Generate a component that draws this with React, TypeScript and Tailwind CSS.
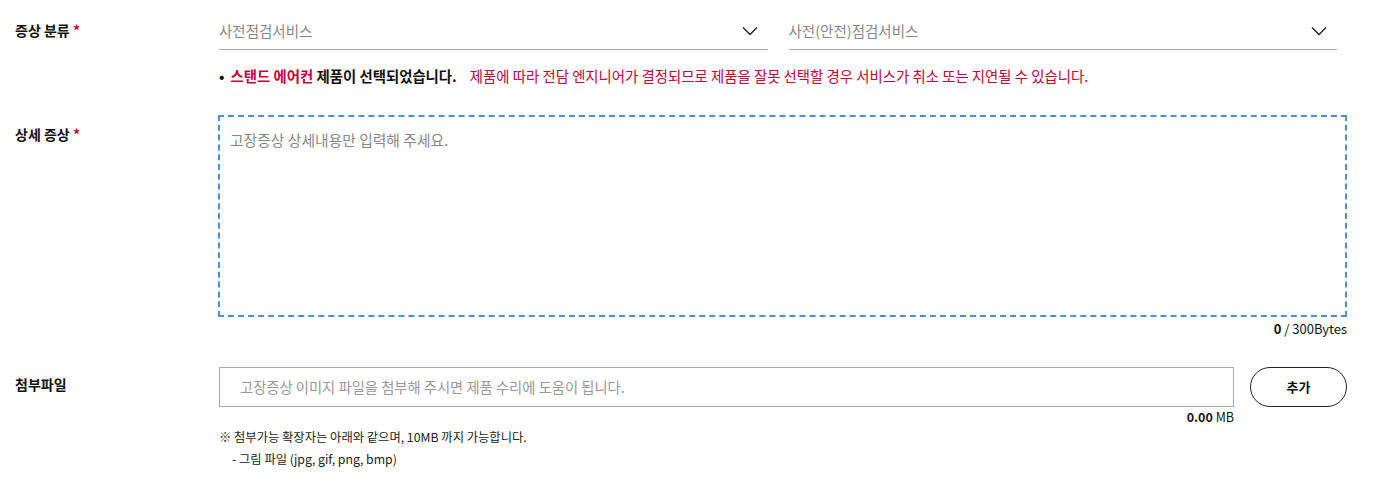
import React, { useState } from "react";

const font = { fontFamily: '"Noto Sans CJK KR", "Noto Sans", sans-serif' };

function Chevron() {
  return (
    <svg width="16" height="10" viewBox="0 0 16 10" fill="none" className="shrink-0">
      <path d="M1 1.5l7 7 7-7" stroke="#222" strokeWidth="1.4" />
    </svg>
  );
}

function Select({ value }: { value: string }) {
  return (
    <div className="flex-1 flex items-center justify-between h-[38px] mt-[12px] border-b border-[#aaa] pr-[10px] cursor-pointer">
      <span className="text-[14.5px] text-[#888]">{value}</span>
      <Chevron />
    </div>
  );
}

export default function App() {
  const [text, setText] = useState("");

  return (
    <div className="w-[1380px] h-[482px] bg-white text-[#111] overflow-hidden" style={font}>
      {/* 증상 분류 */}
      <div className="flex">
        <div className="w-[219px] pl-[15px] pt-[20px] text-[14px] font-bold">
          증상 분류 <span className="text-[#c4003b]">*</span>
        </div>
        <div className="w-[1118px]">
          <div className="flex gap-[21px]">
            <Select value="사전점검서비스" />
            <Select value="사전(안전)점검서비스" />
          </div>
          <div className="flex items-center mt-[16px] text-[14.4px] leading-[20px]">
            <span className="font-bold mr-[6px]">•</span>
            <span className="font-bold">
              <span className="text-[#c4003b]">스탠드 에어컨</span> 제품이 선택되었습니다.
            </span>
            <span className="ml-[13px] text-[#c4003b]">
              제품에 따라 전담 엔지니어가 결정되므로 제품을 잘못 선택할 경우 서비스가 취소 또는 지연될 수 있습니다.
            </span>
          </div>
        </div>
      </div>

      {/* 상세 증상 */}
      <div className="flex mt-[29px]">
        <div className="w-[218px] pl-[15px] pt-[9px] text-[14px] font-bold">
          상세 증상 <span className="text-[#c4003b]">*</span>
        </div>
        <div className="w-[1129px]">
          <textarea
            value={text}
            onChange={(e) => setText(e.target.value)}
            placeholder="고장증상 상세내용만 입력해 주세요."
            className="block w-full h-[202px] resize-none border-2 border-dashed border-[#4a8fd9] px-[10px] py-[12px] text-[14.8px] text-[#333] placeholder:text-[#888] outline-none"
          />
          <div className="text-right text-[13px] mt-[4px] leading-[16px]">
            <span className="font-bold">0</span> / 300Bytes
          </div>
        </div>
      </div>

      {/* 첨부파일 */}
      <div className="flex mt-[30px]">
        <div className="w-[219px] pl-[15px] pt-[7px] text-[14px] font-bold">첨부파일</div>
        <div className="flex-1">
          <div className="flex">
            <div className="w-[1015px]">
              <div className="h-[40px] border border-[#aaa] flex items-center px-[20px] text-[14.3px] text-[#999]">
                고장증상 이미지 파일을 첨부해 주시면 제품 수리에 도움이 됩니다.
              </div>
              <div className="text-right text-[12.5px] leading-[18px] mt-[1px]">
                <span className="font-bold">0.00</span> MB
              </div>
            </div>
            <button className="ml-[16px] w-[97px] h-[40px] rounded-full border border-[#222] text-[13px] font-bold">
              추가
            </button>
          </div>
          <div className="mt-0 text-[12.3px] leading-[22px] text-[#222]">
            <div>※ 첨부가능 확장자는 아래와 같으며, 10MB 까지 가능합니다.</div>
            <div className="pl-[13px]">- 그림 파일 (jpg, gif, png, bmp)</div>
          </div>
        </div>
      </div>
    </div>
  );
}
